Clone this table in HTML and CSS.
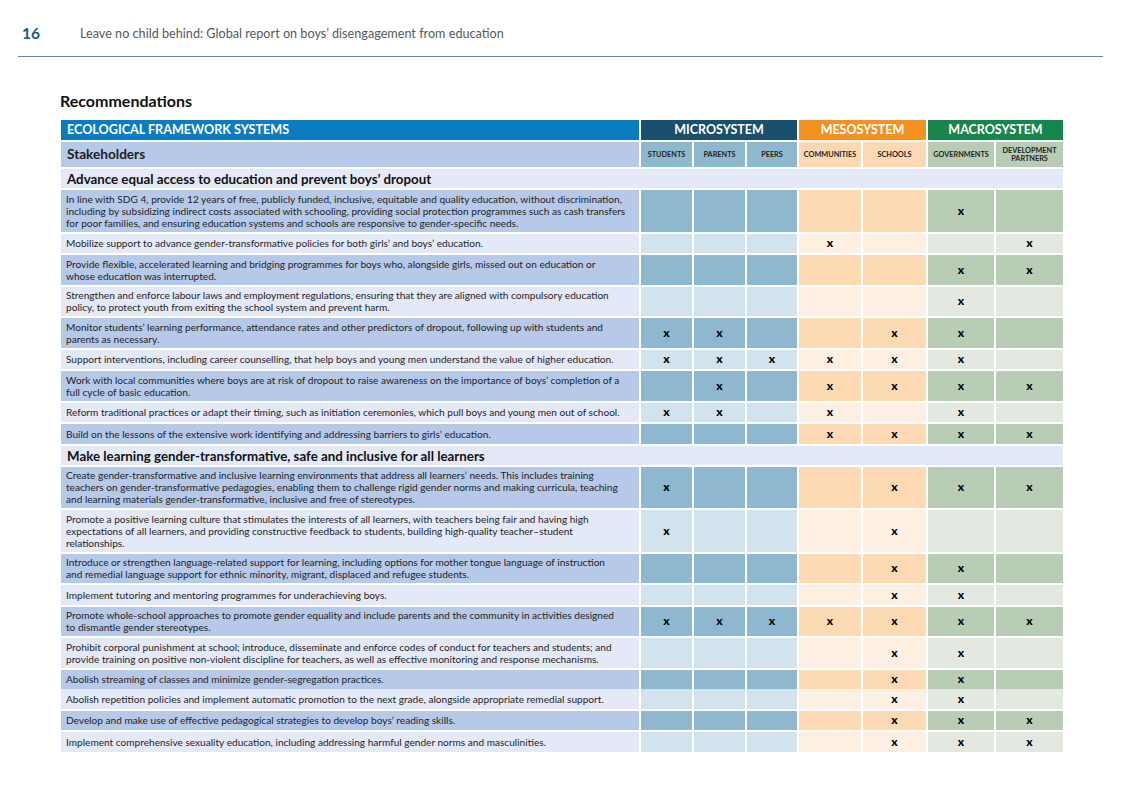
FILE: index.html
```html
<!DOCTYPE html>
<html lang="en">
<head>
<meta charset="utf-8">
<title>Recommendations</title>
<link rel="stylesheet" href="styles.css">
</head>
<body>
<header class="page-header">
  <span class="page-num">16</span>
  <span class="page-title">Leave no child behind: Global report on boys’ disengagement from education</span>
</header>
<main class="content">
  <h2 class="title">Recommendations</h2>
  <table class="matrix">
    <colgroup>
      <col class="w-left"><col class="w-s"><col class="w-s"><col class="w-pe"><col class="w-c"><col class="w-sc"><col class="w-g"><col class="w-d">
    </colgroup>
    <thead>
      <tr class="sys">
        <th class="eco">ECOLOGICAL FRAMEWORK SYSTEMS</th>
        <th class="mi" colspan="3">MICROSYSTEM</th>
        <th class="me" colspan="2">MESOSYSTEM</th>
        <th class="ma" colspan="2">MACROSYSTEM</th>
      </tr>
      <tr class="stake">
        <th class="left">Stakeholders</th>
        <th class="mi">STUDENTS</th>
        <th class="mi">PARENTS</th>
        <th class="mi">PEERS</th>
        <th class="me">COMMUNITIES</th>
        <th class="me">SCHOOLS</th>
        <th class="ma">GOVERNMENTS</th>
        <th class="ma">DEVELOPMENT<br>PARTNERS</th>
      </tr>
    </thead>
    <tbody>
      <tr class="section"><td colspan="8">Advance equal access to education and prevent boys’ dropout</td></tr>
      <tr class="dark">
        <td class="left">In line with SDG 4, provide 12 years of free, publicly funded, inclusive, equitable and quality education, without discrimination,<br>including by subsidizing indirect costs associated with schooling, providing social protection programmes such as cash transfers<br>for poor families, and ensuring education systems and schools are responsive to gender-specific needs.</td>
        <td class="mi"></td><td class="mi"></td><td class="mi"></td><td class="me"></td><td class="me"></td><td class="ma">x</td><td class="ma"></td>
      </tr>
      <tr class="light one">
        <td class="left">Mobilize support to advance gender-transformative policies for both girls’ and boys’ education.</td>
        <td class="mi"></td><td class="mi"></td><td class="mi"></td><td class="me">x</td><td class="me"></td><td class="ma"></td><td class="ma">x</td>
      </tr>
      <tr class="dark">
        <td class="left">Provide flexible, accelerated learning and bridging programmes for boys who, alongside girls, missed out on education or<br>whose education was interrupted.</td>
        <td class="mi"></td><td class="mi"></td><td class="mi"></td><td class="me"></td><td class="me"></td><td class="ma">x</td><td class="ma">x</td>
      </tr>
      <tr class="light">
        <td class="left">Strengthen and enforce labour laws and employment regulations, ensuring that they are aligned with compulsory education<br>policy, to protect youth from exiting the school system and prevent harm.</td>
        <td class="mi"></td><td class="mi"></td><td class="mi"></td><td class="me"></td><td class="me"></td><td class="ma">x</td><td class="ma"></td>
      </tr>
      <tr class="dark">
        <td class="left">Monitor students’ learning performance, attendance rates and other predictors of dropout, following up with students and<br>parents as necessary.</td>
        <td class="mi">x</td><td class="mi">x</td><td class="mi"></td><td class="me"></td><td class="me">x</td><td class="ma">x</td><td class="ma"></td>
      </tr>
      <tr class="light one">
        <td class="left">Support interventions, including career counselling, that help boys and young men understand the value of higher education.</td>
        <td class="mi">x</td><td class="mi">x</td><td class="mi">x</td><td class="me">x</td><td class="me">x</td><td class="ma">x</td><td class="ma"></td>
      </tr>
      <tr class="dark">
        <td class="left">Work with local communities where boys are at risk of dropout to raise awareness on the importance of boys’ completion of a<br>full cycle of basic education.</td>
        <td class="mi"></td><td class="mi">x</td><td class="mi"></td><td class="me">x</td><td class="me">x</td><td class="ma">x</td><td class="ma">x</td>
      </tr>
      <tr class="light one">
        <td class="left">Reform traditional practices or adapt their timing, such as initiation ceremonies, which pull boys and young men out of school.</td>
        <td class="mi">x</td><td class="mi">x</td><td class="mi"></td><td class="me">x</td><td class="me"></td><td class="ma">x</td><td class="ma"></td>
      </tr>
      <tr class="dark one">
        <td class="left">Build on the lessons of the extensive work identifying and addressing barriers to girls’ education.</td>
        <td class="mi"></td><td class="mi"></td><td class="mi"></td><td class="me">x</td><td class="me">x</td><td class="ma">x</td><td class="ma">x</td>
      </tr>
      <tr class="section"><td colspan="8">Make learning gender-transformative, safe and inclusive for all learners</td></tr>
      <tr class="dark">
        <td class="left">Create gender-transformative and inclusive learning environments that address all learners’ needs. This includes training<br>teachers on gender-transformative pedagogies, enabling them to challenge rigid gender norms and making curricula, teaching<br>and learning materials gender-transformative, inclusive and free of stereotypes.</td>
        <td class="mi">x</td><td class="mi"></td><td class="mi"></td><td class="me"></td><td class="me">x</td><td class="ma">x</td><td class="ma">x</td>
      </tr>
      <tr class="light">
        <td class="left">Promote a positive learning culture that stimulates the interests of all learners, with teachers being fair and having high<br>expectations of all learners, and providing constructive feedback to students, building high-quality teacher–student<br>relationships.</td>
        <td class="mi">x</td><td class="mi"></td><td class="mi"></td><td class="me"></td><td class="me">x</td><td class="ma"></td><td class="ma"></td>
      </tr>
      <tr class="dark">
        <td class="left">Introduce or strengthen language-related support for learning, including options for mother tongue language of instruction<br>and remedial language support for ethnic minority, migrant, displaced and refugee students.</td>
        <td class="mi"></td><td class="mi"></td><td class="mi"></td><td class="me"></td><td class="me">x</td><td class="ma">x</td><td class="ma"></td>
      </tr>
      <tr class="light one">
        <td class="left">Implement tutoring and mentoring programmes for underachieving boys.</td>
        <td class="mi"></td><td class="mi"></td><td class="mi"></td><td class="me"></td><td class="me">x</td><td class="ma">x</td><td class="ma"></td>
      </tr>
      <tr class="dark">
        <td class="left">Promote whole-school approaches to promote gender equality and include parents and the community in activities designed<br>to dismantle gender stereotypes.</td>
        <td class="mi">x</td><td class="mi">x</td><td class="mi">x</td><td class="me">x</td><td class="me">x</td><td class="ma">x</td><td class="ma">x</td>
      </tr>
      <tr class="light">
        <td class="left">Prohibit corporal punishment at school; introduce, disseminate and enforce codes of conduct for teachers and students; and<br>provide training on positive non-violent discipline for teachers, as well as effective monitoring and response mechanisms.</td>
        <td class="mi"></td><td class="mi"></td><td class="mi"></td><td class="me"></td><td class="me">x</td><td class="ma">x</td><td class="ma"></td>
      </tr>
      <tr class="dark one joined-below">
        <td class="left">Abolish streaming of classes and minimize gender-segregation practices.</td>
        <td class="mi"></td><td class="mi"></td><td class="mi"></td><td class="me"></td><td class="me">x</td><td class="ma">x</td><td class="ma"></td>
      </tr>
      <tr class="light one joined-above">
        <td class="left">Abolish repetition policies and implement automatic promotion to the next grade, alongside appropriate remedial support.</td>
        <td class="mi"></td><td class="mi"></td><td class="mi"></td><td class="me"></td><td class="me">x</td><td class="ma">x</td><td class="ma"></td>
      </tr>
      <tr class="dark one">
        <td class="left">Develop and make use of effective pedagogical strategies to develop boys’ reading skills.</td>
        <td class="mi"></td><td class="mi"></td><td class="mi"></td><td class="me"></td><td class="me">x</td><td class="ma">x</td><td class="ma">x</td>
      </tr>
      <tr class="light one">
        <td class="left">Implement comprehensive sexuality education, including addressing harmful gender norms and masculinities.</td>
        <td class="mi"></td><td class="mi"></td><td class="mi"></td><td class="me"></td><td class="me">x</td><td class="ma">x</td><td class="ma">x</td>
      </tr>
    </tbody>
  </table>
</main>
</body>
</html>
```

FILE: styles.css
```css
* { box-sizing: border-box; }

body {
  margin: 0;
  width: 1122px;
  background: #ffffff;
  color: #231f20;
  font-family: Lato, "Open Sans", "Liberation Sans", sans-serif;
}

.page-header {
  display: flex;
  align-items: center;
  height: 57px;
  margin: 0 19px 0 18px;
  padding-top: 10px;
  border-bottom: 1px solid #5d879f;
}

.page-num {
  width: 62px;
  padding-left: 4px;
  font-size: 15.5px;
  font-weight: 700;
  color: #1b5b7c;
}

.page-title {
  font-size: 12.65px;
  color: #58595b;
}

.content {
  padding: 0 59px;
}

.title {
  margin: 36px 0 9px 1px;
  font-size: 16px;
  line-height: 16px;
  font-weight: 700;
  color: #111111;
}

.matrix {
  width: 1004px;
  table-layout: fixed;
  border-collapse: collapse;
}

.w-left { width: 580px; }
.w-s { width: 53px; }
.w-pe { width: 52px; }
.w-c { width: 64px; }
.w-sc { width: 65px; }
.w-g { width: 68px; }
.w-d { width: 69px; }

.matrix th,
.matrix td {
  border: 2px solid #ffffff;
}

/* System header row */
.sys th {
  padding: 3px 6px;
  line-height: 14px;
  font-size: 12.5px;
  font-weight: 700;
  color: #ffffff;
  text-align: center;
}
.sys .eco { background: #0b7cc1; text-align: left; font-size: 12.6px; }
.sys .mi { background: #1a4f6e; }
.sys .me { background: #f5921f; }
.sys .ma { background: #17864a; }

/* Stakeholder row */
.stake th {
  padding: 4px 1px;
  line-height: 8px;
  font-weight: 700;
  text-align: center;
  vertical-align: middle;
  font-size: 7.3px;
  color: #231f20;
}
.stake .left {
  text-align: left;
  padding: 5px 6px;
  line-height: 15px;
  font-size: 13.6px;
  background: #b6c9e8;
}
.stake .mi { background: #8fb8ce; }
.stake .me { background: #fdd8b4; }
.stake .ma { background: #b8cbb4; }

/* Section rows */
.section td {
  padding: 3px 6px 2px;
  line-height: 14px;
  font-size: 13.3px;
  font-weight: 700;
  color: #111111;
  background: #e3e9f6;
}

/* Data rows */
.dark td, .light td {
  padding: 2.75px 5px;
  line-height: 12px;
  text-align: center;
  vertical-align: middle;
  font-weight: 900;
  color: #000000;
  font-size: 12px;
}
.one td { padding-top: 3.75px; padding-bottom: 3.75px; }
.dark .left, .light .left {
  text-align: left;
  font-weight: 400;
  color: #1e1e1e;
  font-size: 10.1px;
}

.dark .left { background: #b6c9e8; }
.dark .mi { background: #8db8cf; }
.dark .me { background: #fdd9b4; }
.dark .ma { background: #b9ccb5; }

.light .left { background: #e4e9f7; }
.light .mi { background: #d3e3ed; }
.light .me { background: #fdf0e2; }
.light .ma { background: #e3e9e1; }

.joined-below td { border-bottom-style: hidden; }
.joined-above td { border-top-style: hidden; }
```
